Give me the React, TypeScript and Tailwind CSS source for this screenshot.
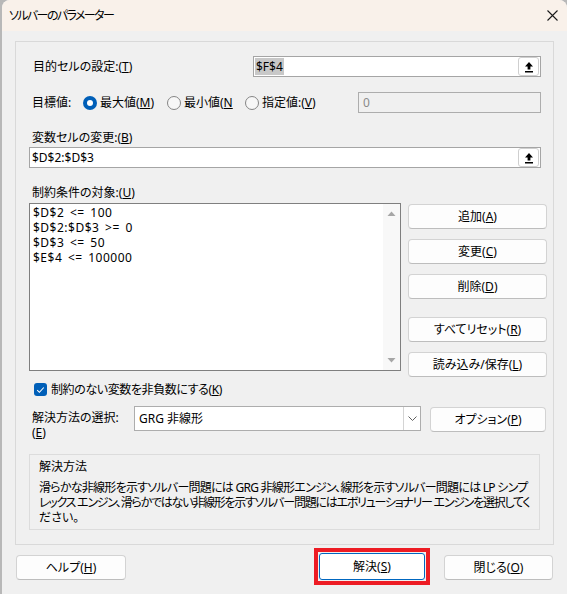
import React from 'react';

const font = "font-['Noto_Sans','Noto_Sans_CJK_JP',sans-serif] [font-feature-settings:'palt']";

function UploadIcon() {
  return (
    <svg width="10" height="12" viewBox="0 0 10 12">
      <path d="M5 1 L9 5.5 H6.4 V8.5 H3.6 V5.5 H1 Z" fill="#000" />
      <rect x="1" y="10" width="8" height="1.5" fill="#000" />
    </svg>
  );
}

function RefInput({ value, selected, width }: { value: string; selected?: boolean; width: string }) {
  return (
    <div className={`${width} h-[21px] border border-[#a5a5a5] bg-white flex items-center pl-[1px] pr-[1px]`}>
      <div className="flex-1 flex items-center">
        <span className={`leading-[17px] px-[1px] ${selected ? 'bg-[#c8c8c8]' : ''}`}>{value}</span>
      </div>
      <div className="w-[21px] h-[19px] border border-[#cfcfcf] rounded-[3px] bg-white flex items-center justify-center">
        <UploadIcon />
      </div>
    </div>
  );
}

function Radio({ checked, children }: { checked?: boolean; children: React.ReactNode }) {
  return (
    <div className="flex items-center gap-[3px]">
      {checked ? (
        <div className="w-[14px] h-[14px] rounded-full bg-[#005fb8] flex items-center justify-center">
          <div className="w-[6px] h-[6px] rounded-full bg-white" />
        </div>
      ) : (
        <div className="w-[14px] h-[14px] rounded-full border border-[#858585] bg-[#f7f7f7]" />
      )}
      <span className="leading-[15px] whitespace-nowrap">{children}</span>
    </div>
  );
}

function Btn({ children, className = '' }: { children: React.ReactNode; className?: string }) {
  return (
    <div
      className={`h-[25px] bg-[#fdfdfd] border border-[#d3d3d3] border-b-[#bdbdbd] rounded-[4px] flex items-center justify-center leading-[15px] whitespace-nowrap ${className}`}
    >
      {children}
    </div>
  );
}

const constraints = ['$D$2 <= 100', '$D$2:$D$3 >= 0', '$D$3 <= 50', '$E$4 <= 100000'];

export default function App() {
  return (
    <div className={`w-[567px] h-[594px] bg-[#b8b8b8] text-[12px] text-black ${font}`}>
      <div className="ml-[2px] w-[565px] h-[594px] bg-[#f0f0f0] rounded-t-[8px] overflow-hidden">
        {/* Title bar */}
        <div className="h-[31px] bg-[#f9f1ea] flex items-center pl-[7px] pr-[8px]">
          <span className="flex-1 leading-[15px] tracking-[-1.6px]">ソルバーのパラメーター</span>
          <svg width="11" height="11" viewBox="0 0 11 11" className="mr-[1px]">
            <path d="M0.5 0.5 L10.5 10.5 M10.5 0.5 L0.5 10.5" stroke="#1a1a1a" strokeWidth="1.1" />
          </svg>
        </div>

        {/* Group box */}
        <div className="ml-[13px] mt-[10px] w-[539px] h-[504px] border border-[#d9d9d9] pl-[13px] flex flex-col">
          {/* Target cell */}
          <div className="mt-[14px] w-[512px] h-[21px] flex items-center">
            <span className="flex-1 pl-[4px] leading-[15px]">
              目的セルの設定:(<u>T</u>)
            </span>
            <RefInput value="$F$4" selected width="w-[288px]" />
          </div>

          {/* Objective */}
          <div className="mt-[15px] w-[512px] h-[21px] flex items-center">
            <span className="w-[54px] pl-[3px] leading-[15px]">目標値:</span>
            <div className="w-[84px]">
              <Radio checked>
                最大値(<u>M</u>)
              </Radio>
            </div>
            <div className="w-[78px]">
              <Radio>
                最小値(<u>N</u>
              </Radio>
            </div>
            <div className="flex-1">
              <Radio>
                指定値:(<u>V</u>)
              </Radio>
            </div>
            <div className="w-[183px] h-[21px] border border-[#adadad] bg-[#f0f0f0] flex items-center pl-[4px] text-[#8a8a8a]">
              0
            </div>
          </div>

          {/* Variable cells */}
          <div className="mt-[17px] h-[15px] pl-[3px] leading-[15px]">
            変数セルの変更:(<u>B</u>)
          </div>
          <div className="mt-[2px]">
            <RefInput value="$D$2:$D$3" width="w-[512px]" />
          </div>

          {/* Constraints */}
          <div className="mt-[17px] h-[15px] pl-[3px] leading-[15px]">
            制約条件の対象:(<u>U</u>)
          </div>
          <div className="mt-[3px] flex items-start">
            <div className="w-[372px] h-[168px] border border-[#7f7f7f] bg-white flex">
              <div className="flex-1 pl-[3px] pt-[1px] tracking-[0.5px] [word-spacing:2px]">
                {constraints.map((c) => (
                  <div key={c} className="h-[15px] leading-[15px] whitespace-pre">
                    {c}
                  </div>
                ))}
              </div>
              <div className="w-[17px] h-full bg-[#f8f8f8] flex flex-col items-center justify-between py-[7px]">
                <svg width="9" height="5" viewBox="0 0 9 5">
                  <path d="M0.5 5 L4.5 0.5 L8.5 5 Z" fill="#a6a6a6" />
                </svg>
                <svg width="9" height="5" viewBox="0 0 9 5">
                  <path d="M0.5 0 L4.5 4.5 L8.5 0 Z" fill="#a6a6a6" />
                </svg>
              </div>
            </div>
            <div className="ml-[7px] w-[139px] mt-[1px] flex flex-col">
              <Btn>
                追加(<u>A</u>)
              </Btn>
              <Btn className="mt-[10px]">
                変更(<u>C</u>)
              </Btn>
              <Btn className="mt-[10px]">
                削除(<u>D</u>)
              </Btn>
              <Btn className="mt-[18px]">
                すべてリセット(<u>R</u>)
              </Btn>
              <Btn className="mt-[10px]">
                読み込み/保存(<u>L</u>)
              </Btn>
            </div>
          </div>

          {/* Non-negative checkbox */}
          <div className="mt-[6px] ml-[5px] h-[13px] flex items-center gap-[4px]">
            <div className="w-[13px] h-[13px] rounded-[3px] bg-[#005fb8] flex items-center justify-center">
              <svg width="9" height="8" viewBox="0 0 9 8">
                <path d="M1.2 4.2 L3.4 6.3 L7.8 1.5" stroke="#fff" strokeWidth="1.1" fill="none" />
              </svg>
            </div>
            <span className="leading-[15px] tracking-[-0.4px]">
              制約のない変数を非負数にする(<u>K</u>)
            </span>
          </div>

          {/* Solving method */}
          <div className="mt-[10px] flex items-start">
            <div className="w-[105px] pl-[3px] pt-[4px] leading-[15px]">
              <div className="h-[15px]">解決方法の選択:</div>
              <div className="h-[15px]">
                (<u>E</u>)
              </div>
            </div>
            <div className="w-[287px] h-[25px] border border-[#adadad] bg-white flex">
              <div className="flex-1 flex items-center pl-[4px] leading-[15px]">GRG 非線形</div>
              <div className="w-[17px] border-l border-[#d4d4d4] flex items-center justify-center">
                <svg width="9" height="5" viewBox="0 0 9 5">
                  <path d="M0.5 0.5 L4.5 4.5 L8.5 0.5" stroke="#606060" strokeWidth="1" fill="none" />
                </svg>
              </div>
            </div>
            <Btn className="ml-[9px] w-[116px] mt-[1px]">
              オプション(<u>P</u>)
            </Btn>
          </div>

          {/* Description */}
          <div className="mt-[14px] w-[511px] h-[76px] border border-[#dcdcdc] pl-[9px] pt-[4px]">
            <div className="leading-[15px]">解決方法</div>
            <div className="mt-[6px] leading-[15px] whitespace-nowrap">
              <div className="h-[15px] tracking-[-0.75px]">
                滑らかな非線形を示すソルバー問題には GRG 非線形エンジン、線形を示すソルバー問題には LP シンプ
              </div>
              <div className="h-[15px] tracking-[-1.25px]">
                レックス エンジン、滑らかではない非線形を示すソルバー問題にはエボリューショナリー エンジンを選択してく
              </div>
              <div className="h-[15px]">ださい。</div>
            </div>
          </div>
        </div>

        {/* Bottom buttons */}
        <div className="mt-[3px] flex items-start">
          <Btn className="ml-[14px] mt-[7px] w-[110px]">
            ヘルプ(<u>H</u>)
          </Btn>
          <div className="ml-[188px] w-[116px] h-[37px] border-[4px] border-[#ed1c24] p-[1px]">
            <div className="w-full h-full bg-white border border-[#0067c0] rounded-[3px] flex items-center justify-center leading-[15px]">
              解決(<u>S</u>)
            </div>
          </div>
          <Btn className="ml-[14px] mt-[7px] w-[109px]">
            閉じる(<u>O</u>)
          </Btn>
        </div>
      </div>
    </div>
  );
}
